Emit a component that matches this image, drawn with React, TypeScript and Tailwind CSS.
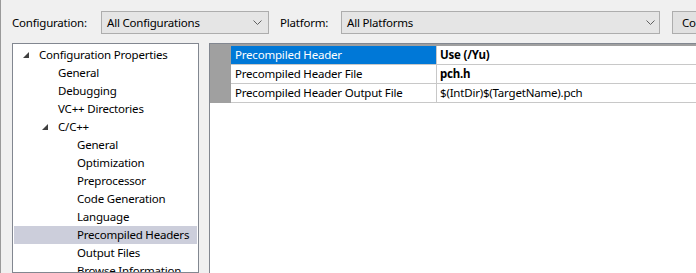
import React from "react";

const font = { fontFamily: '"Noto Sans", "Open Sans", sans-serif' };

function Chevron() {
  return (
    <svg width="9" height="5" viewBox="0 0 9 5" className="shrink-0">
      <path d="M0.5 0.5 L4.5 4.5 L8.5 0.5" fill="none" stroke="#606060" strokeWidth="1" />
    </svg>
  );
}

function Tri() {
  return (
    <svg width="6" height="6" viewBox="0 0 6 6" className="shrink-0">
      <polygon points="6,0 6,6 0,6" fill="#404040" />
    </svg>
  );
}

type Node = { label: string; level: number; expanded?: boolean; selected?: boolean };

const nodes: Node[] = [
  { label: "Configuration Properties", level: 0, expanded: true },
  { label: "General", level: 1 },
  { label: "Debugging", level: 1 },
  { label: "VC++ Directories", level: 1 },
  { label: "C/C++", level: 1, expanded: true },
  { label: "General", level: 2 },
  { label: "Optimization", level: 2 },
  { label: "Preprocessor", level: 2 },
  { label: "Code Generation", level: 2 },
  { label: "Language", level: 2 },
  { label: "Precompiled Headers", level: 2, selected: true },
  { label: "Output Files", level: 2 },
  { label: "Browse Information", level: 2 },
];

const levelPad = ["pl-[25px]", "pl-[44px]", "pl-[63px]"];

const rows = [
  { name: "Precompiled Header", value: "Use (/Yu)", bold: true, active: true },
  { name: "Precompiled Header File", value: "pch.h", bold: true },
  { name: "Precompiled Header Output File", value: "$(IntDir)$(TargetName).pch", bold: false },
];

export default function App() {
  return (
    <div
      className="w-[696px] h-[273px] bg-[#f0f0f0] overflow-hidden border-l border-[#9a9a9a] text-[11.5px] tracking-[-0.2px] text-black flex flex-col"
      style={font}
    >
      {/* top bar */}
      <div className="h-[43px] shrink-0 flex items-center pl-[11px] pt-[2px] whitespace-nowrap">
        <span className="w-[89px] shrink-0">Configuration:</span>
        <div className="w-[168px] h-[23px] shrink-0 bg-[#e5e5e5] border border-[#adadad] flex items-center pl-[5px] pr-[6px]">
          <span className="flex-1">All Configurations</span>
          <Chevron />
        </div>
        <span className="w-[72px] shrink-0 pl-[11px]">Platform:</span>
        <div className="w-[319px] h-[23px] shrink-0 bg-[#e5e5e5] border border-[#adadad] flex items-center pl-[5px] pr-[4px]">
          <span className="flex-1">All Platforms</span>
          <Chevron />
        </div>
        <div className="ml-[12px] w-[140px] h-[23px] shrink-0 bg-[#e1e1e1] border border-[#adadad] flex items-center pl-[9px]">
          Configuration Manager...
        </div>
      </div>

      {/* main */}
      <div className="flex flex-1 min-h-0 pl-[11px]">
        {/* tree */}
        <div className="w-[187px] shrink-0 bg-white border border-[#828790] pt-[2px] px-px overflow-hidden">
          {nodes.map((n, i) => (
            <div
              key={i}
              className={`h-[18px] flex items-center relative whitespace-nowrap ${levelPad[n.level]} ${
                n.selected ? "bg-[#cccedb]" : ""
              }`}
            >
              {n.expanded && (
                <span className="absolute top-[6px]" style={{ left: 9 + 19 * n.level }}>
                  <Tri />
                </span>
              )}
              {n.label}
            </div>
          ))}
        </div>

        {/* property grid */}
        <div className="ml-[10px] flex-1 bg-white border-t border-l border-[#828790] overflow-hidden">
          <div className="bg-[#a0a0a0] pt-[2px] pl-[21px]">
            {rows.map((r, i) => (
              <div key={i} className="flex h-[19px] border-b border-[#c8c8c8] bg-white">
                <div
                  className={`w-[206px] shrink-0 flex items-center pl-[4px] border-r border-[#c8c8c8] whitespace-nowrap ${
                    r.active ? "bg-[#0078d7] text-white" : ""
                  }`}
                >
                  {r.name}
                </div>
                <div className={`flex-1 flex items-center pl-[3px] whitespace-nowrap ${r.bold ? "font-bold" : ""}`}>
                  {r.value}
                </div>
              </div>
            ))}
          </div>
        </div>
      </div>
    </div>
  );
}
